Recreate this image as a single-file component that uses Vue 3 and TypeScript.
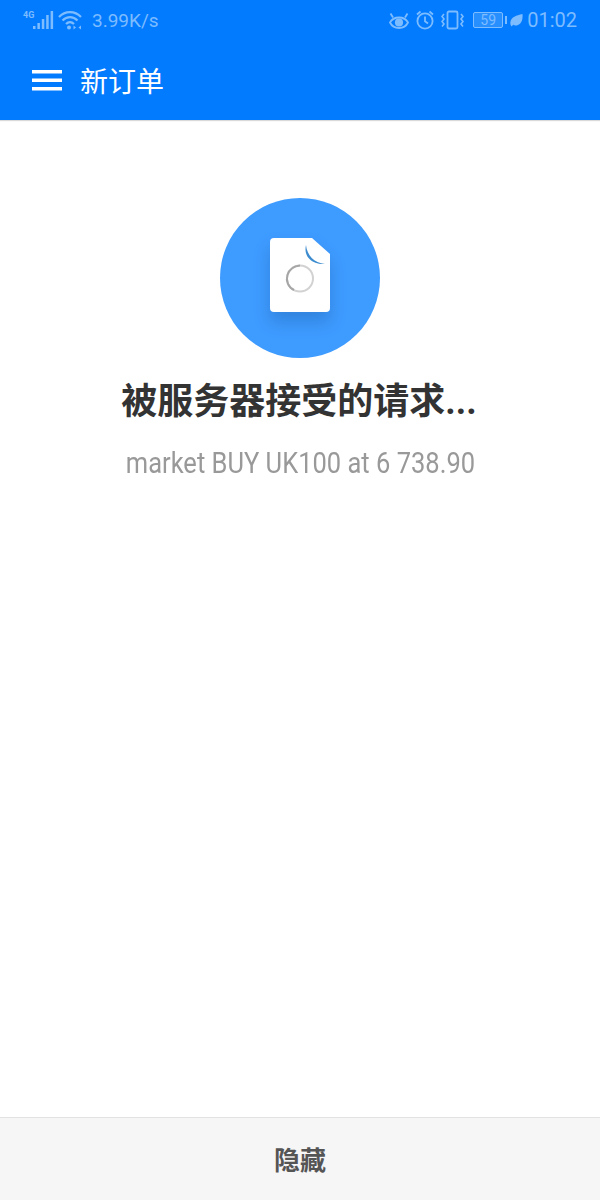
<script setup lang="ts">
const title = '被服务器接受的请求...'
const detail = 'market BUY UK100 at 6 738.90'
</script>

<template>
  <div class="screen">
    <header class="appbar">
      <div class="status">
        <div class="status-left">
          <svg class="net" width="36" height="20" viewBox="0 0 36 20">
            <text x="0" y="8" class="net-label">4G</text>
            <g fill="currentColor">
              <rect x="10" y="16" width="2.5" height="3" />
              <rect x="14.4" y="13" width="2.5" height="6" />
              <rect x="18.800" y="9" width="2.5" height="10" />
              <rect x="23.200" y="5" width="2.5" height="14" />
              <rect x="27.600" y="1" width="2.5" height="18" />
            </g>
          </svg>
          <svg class="wifi" width="24" height="20" viewBox="0 0 24 20" fill="none" stroke="currentColor" stroke-width="2.200">
            <path d="M1 7C7 .5 17 .5 23 7" />
            <path d="M4.500 10.500C9 6 15 6 19.500 10.500" />
            <path d="M8 14C10.500 11.500 13.500 11.500 16 14" />
            <circle cx="11" cy="17.500" r="2" fill="currentColor" stroke="none" />
            <path d="M15.500 15.500l2.500 2-2.500 2zM23 15.500l-2.500 2 2.500 2z" fill="currentColor" stroke="none" />
          </svg>
          <span class="speed">3.99K/s</span>
        </div>
        <div class="status-right">
          <svg class="eye" width="20" height="20" viewBox="0 0 20 20" fill="none" stroke="currentColor" stroke-width="1.800">
            <path d="M1 12.500C3 9 6.500 7.500 10 7.500s7 1.500 9 5C17 16.500 13.500 18 10 18s-7-1.500-9-5.500z" />
            <circle cx="10" cy="12.500" r="3.200" fill="currentColor" />
            <path d="M1.500 3.500L4 7.500M18.500 3.500L16 7.500" stroke-width="1.800" />
          </svg>
          <svg class="alarm" width="18" height="20" viewBox="0 0 18 20" fill="none" stroke="currentColor" stroke-width="1.800">
            <circle cx="9" cy="11" r="7.600" />
            <path d="M9 6.500v4.800l3 2.200" />
            <path d="M1 4.500L4.500 1.500M17 4.500L13.500 1.500" />
          </svg>
          <svg class="vibrate" width="23" height="20" viewBox="0 0 23 20" fill="none" stroke="currentColor" stroke-width="1.800">
            <rect x="6.500" y="1.500" width="10" height="17" rx="1.500" />
            <path d="M3 4L1 6.500 3 9 1 11.500 3 14 1 16.500M20 4l2 2.500L20 9l2 2.500L20 14l2 2.500" stroke-width="1.600" />
          </svg>
          <div class="battery">
            <div class="battery-body">59</div>
            <div class="battery-tip"></div>
          </div>
          <svg class="leaf" width="13" height="14" viewBox="0 0 13 14">
            <path d="M1.500 13.500C.500 12 0 10.500 .500 8.500 1.500 4 6 2.500 12.500 1c.5 5.500-1 9.500-4.500 11-2 .8-3.500.6-4.800-.2L8 6 2.500 12.500z" fill="currentColor" />
          </svg>
          <span class="clock">01:02</span>
        </div>
      </div>
      <div class="toolbar">
        <svg class="menu" width="30" height="21" viewBox="0 0 30 21" fill="#fff">
          <rect y="0" width="30" height="3.500" />
          <rect y="8.500" width="30" height="3.500" />
          <rect y="17" width="30" height="3.500" />
        </svg>
        <h1>新订单</h1>
      </div>
    </header>

    <main class="content">
      <div class="badge">
        <svg class="doc" width="60" height="74" viewBox="0 0 60 74">
          <path d="M4 0H42L60 16V70a4 4 0 0 1-4 4H4a4 4 0 0 1-4-4V4a4 4 0 0 1 4-4z" fill="#fff" />
          <path d="M36 7C37 17 44 25 55 26C44 27 33 20 36 7z" fill="#3d8ccf" />
          <circle cx="30" cy="40.500" r="13" fill="none" stroke="#d2d2d2" stroke-width="2" />
          <path d="M24 52C18.500 49.500 15.500 43 17.500 37S24 28 30 27.500" fill="none" stroke="#a6a6a6" stroke-width="2" />
        </svg>
      </div>
      <h2 class="title">{{ title }}</h2>
      <p class="detail"><span>{{ detail }}</span></p>
    </main>

    <footer class="footer">隐藏</footer>
  </div>
</template>

<style>
html, body { margin: 0; background: #fff; }
</style>

<style scoped>
.screen {
  width: 600px;
  height: 1200px;
  display: flex;
  flex-direction: column;
  font-family: "Roboto", "Noto Sans CJK SC", sans-serif;
  background: #fff;
}

.appbar {
  height: 120px;
  background: #037bff;
  box-shadow: 0 1px 1px rgba(0, 0, 0, 0.15);
  flex-shrink: 0;
}

.status {
  height: 40px;
  padding: 0 23px;
  display: flex;
  align-items: center;
  justify-content: space-between;
  color: #7dbcff;
}
.status-left, .status-right { display: flex; align-items: center; }
.status-left svg, .status-right svg { display: block; }
.net-label { font: 700 9px "Roboto", sans-serif; fill: currentColor; }
.net { margin-right: -1px; }
.speed { font-size: 19px; margin-left: 10px; }
.alarm, .vibrate { margin-left: 7px; }
.battery { display: flex; align-items: center; margin-left: 9px; }
.battery-body {
  width: 28px;
  height: 14px;
  border: 1px solid #7dbcff;
  background: rgba(125, 188, 255, 0.3);
  border-radius: 2px;
  font-size: 14px;
  line-height: 14px;
  text-align: center;
}
.battery-tip { width: 2px; height: 8px; margin-left: 2px; background: #7dbcff; }
.leaf { margin-left: 3px; }
.clock { font-size: 20px; margin-left: 4px; }

.toolbar {
  height: 80px;
  display: flex;
  align-items: center;
  padding-left: 32px;
}
.toolbar h1 {
  margin: 0 0 0 18px;
  font-size: 28px;
  font-weight: 400;
  color: #fff;
}

.content {
  flex: 1;
  display: flex;
  flex-direction: column;
  align-items: center;
  padding-top: 78px;
}
.badge {
  width: 160px;
  height: 160px;
  border-radius: 50%;
  background: #3e9bff;
  display: flex;
  align-items: center;
  justify-content: center;
}
.doc {
  display: block;
  margin-bottom: 6px;
  filter: drop-shadow(0 10px 8px rgba(0, 40, 90, 0.2));
}
.title {
  margin: 20px 2px 0 0;
  font-size: 36px;
  line-height: 48px;
  font-weight: 700;
  color: #333;
}
.detail {
  margin: 19px 0 0;
  font-size: 30px;
  line-height: 36px;
  color: #999;
}
.detail span { display: inline-block; transform: scaleX(0.85); white-space: nowrap; }

.footer {
  height: 83px;
  box-sizing: border-box;
  flex-shrink: 0;
  padding-bottom: 2px;
  background: #f6f6f6;
  border-top: 1px solid #e2e2e2;
  display: flex;
  align-items: center;
  justify-content: center;
  font-size: 26px;
  font-weight: 700;
  color: #555;
}
</style>
